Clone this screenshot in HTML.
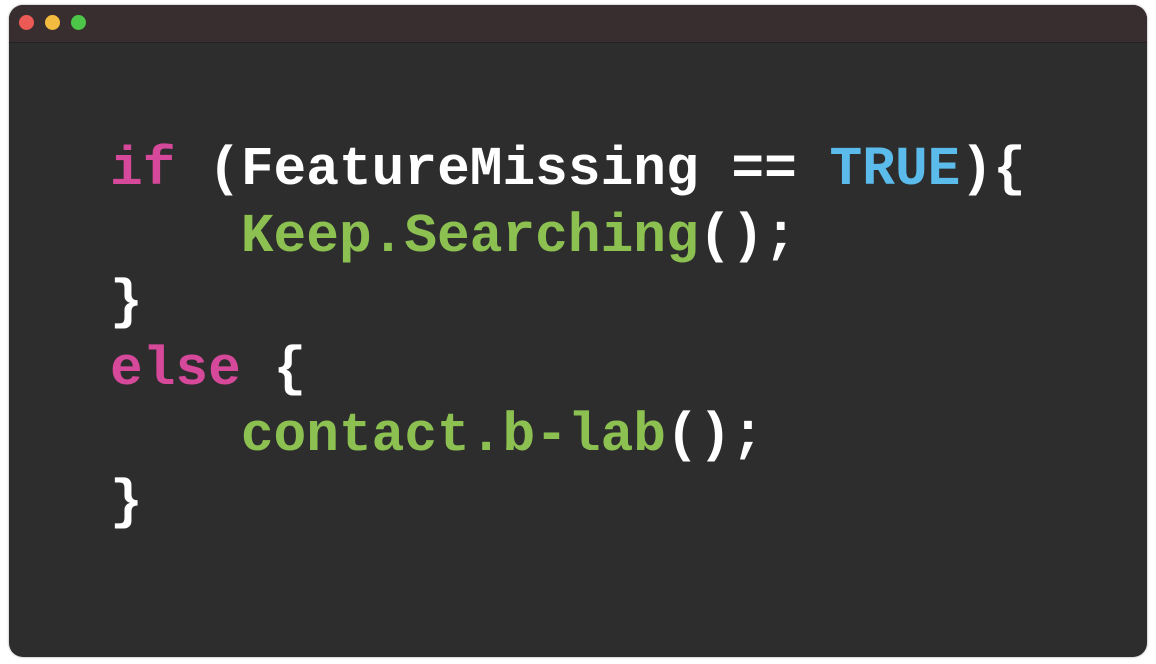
<!DOCTYPE html>
<html><head><style>
html,body{margin:0;padding:0;background:#fff;width:1156px;height:664px;overflow:hidden}
.win{position:absolute;left:9px;top:5px;width:1138px;height:652px;border-radius:14px;background:#2d2d2d;overflow:hidden;box-shadow:0 0 2px rgba(0,0,0,.4)}
.bar{position:absolute;left:0;top:0;right:0;height:37px;background:#382e2f;border-bottom:1px solid #222}
.dot{position:absolute;top:10px;width:15px;height:15px;border-radius:50%}
pre{position:absolute;left:101px;top:133px;margin:0;font-family:"Liberation Mono",monospace;font-weight:bold;font-size:54.5px;line-height:66.6px;color:#fff}
.k{color:#d6489a}.g{color:#8cc152}.b{color:#5bbcec}
</style></head><body>
<div class="win">
<div class="bar">
<div class="dot" style="left:10px;background:#ec5a56"></div>
<div class="dot" style="left:36px;background:#f3bb3f"></div>
<div class="dot" style="left:62px;background:#4cc548"></div>
</div>
<pre><span class="k">if</span> (FeatureMissing == <span class="b">TRUE</span>){
    <span class="g">Keep.Searching</span>();
}
<span class="k">else</span> {
    <span class="g">contact.b-lab</span>();
}</pre>
</div>
</body></html>
